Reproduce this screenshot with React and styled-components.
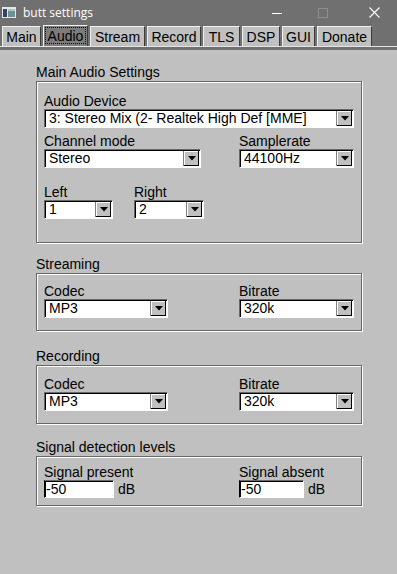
import React from "react";
import styled, { createGlobalStyle } from "styled-components";

const GlobalStyle = createGlobalStyle`
  html, body {
    margin: 0;
    padding: 0;
    background: #c0c0c0;
  }
  body {
    font-family: "Liberation Sans", Arial, sans-serif;
    font-size: 14px;
  }
`;

const Window = styled.div`
  width: 397px;
  height: 574px;
  background: #c0c0c0;
  display: flex;
  flex-direction: column;
  overflow: hidden;
`;

const TitleBar = styled.div`
  height: 25px;
  flex-shrink: 0;
  background: #707070;
  display: flex;
  align-items: center;
  color: #fff;
`;

const AppIcon = styled.svg`
  margin-left: 2px;
  flex-shrink: 0;
`;

const Title = styled.span`
  flex: 1;
  margin-left: 7px;
  font-family: "Segoe UI", "Open Sans", sans-serif;
  font-size: 12px;
  color: #fff;
`;

const WinButton = styled.div`
  width: 46px;
  height: 25px;
  margin-left: ${(p) => p.$gap || 0}px;
  display: flex;
  align-items: center;
  justify-content: center;
`;

const TabStrip = styled.div`
  height: 25px;
  flex-shrink: 0;
  background: #707070;
  display: flex;
  flex-direction: column;
`;

const TabRow = styled.div`
  height: 20px;
  margin-top: 1px;
  padding-left: 2px;
  display: flex;
  align-items: flex-end;
  gap: 2px;
`;

const Tab = styled.div`
  width: ${(p) => p.$w}px;
  height: ${(p) => (p.$active ? 21 : 20)}px;
  box-sizing: border-box;
  border-top: 1px solid #f0f0f0;
  border-left: 1px solid #f0f0f0;
  border-right: 1px solid #3c3c3c;
  background: ${(p) => (p.$active ? "#7c7c7c" : "#c0c0c0")};
  display: flex;
  align-items: center;
  justify-content: center;
  font-size: 14px;
  color: #000;
  outline: ${(p) => (p.$active ? "1px dotted #000" : "none")};
  outline-offset: -3px;
`;

const TabLine = styled.div`
  height: 1px;
  background: #e4e4e4;
`;

const Content = styled.div`
  padding: 14px 35px 0 36px;
`;

const GroupTitle = styled.div`
  height: 16px;
  line-height: 16px;
  margin-top: ${(p) => p.$mt || 0}px;
  color: #000;
`;

const GroupBox = styled.div`
  width: 326px;
  box-sizing: border-box;
  margin-top: 1px;
  padding: ${(p) => p.$pt}px 7px ${(p) => p.$pb}px 7px;
  border: 1px solid #676767;
  box-shadow: 1px 1px 0 #fff, inset 1px 1px 0 #fff;
`;

const Row = styled.div`
  display: flex;
  margin-top: ${(p) => p.$mt || 0}px;
`;

const Field = styled.div`
  width: ${(p) => (p.$w ? `${p.$w}px` : "auto")};
  flex-shrink: 0;
`;

const Label = styled.div`
  height: 16px;
  line-height: 16px;
  color: #000;
  white-space: nowrap;
`;

const SelectBox = styled.div`
  width: ${(p) => p.$w}px;
  height: 19px;
  box-sizing: border-box;
  display: flex;
  background: #fff;
  border-top: 1px solid #696969;
  border-left: 1px solid #696969;
  border-right: 1px solid #fff;
  border-bottom: 1px solid #fff;
  box-shadow: inset 1px 1px 0 #000;
`;

const SelectText = styled.div`
  flex: 1;
  padding-left: 4px;
  line-height: 17px;
  white-space: nowrap;
  overflow: hidden;
  color: #000;
`;

const ArrowButton = styled.div`
  width: 16px;
  margin: 1px 1px 1px 0;
  box-sizing: border-box;
  background: #c0c0c0;
  border-left: 1px solid #808080;
  box-shadow: inset -1px -1px 0 #000, inset 1px 1px 0 #fff;
  display: flex;
  align-items: center;
  justify-content: center;
`;

const InputRow = styled.div`
  display: flex;
  align-items: center;
`;

const InputBox = styled.div`
  width: ${(p) => p.$w}px;
  height: 18px;
  box-sizing: border-box;
  background: #fff;
  border-top: 1px solid #696969;
  border-left: 1px solid #000;
  border-right: 1px solid #fff;
  border-bottom: 1px solid #fff;
  box-shadow: inset 1px 1px 0 #000;
  padding-left: 1px;
  line-height: 16px;
  color: #000;
`;

const Unit = styled.span`
  margin-left: 4px;
  color: #000;
`;

const Select = ({ w, value }) => (
  <SelectBox $w={w}>
    <SelectText>{value}</SelectText>
    <ArrowButton>
      <svg width="8" height="5" viewBox="0 0 8 5">
        <polygon points="0,0 8,0 4,4.5" fill="#000" />
      </svg>
    </ArrowButton>
  </SelectBox>
);

const tabs = [
  { name: "Main", w: 39 },
  { name: "Audio", w: 45, active: true },
  { name: "Stream", w: 55 },
  { name: "Record", w: 54 },
  { name: "TLS", w: 37 },
  { name: "DSP", w: 38 },
  { name: "GUI", w: 33 },
  { name: "Donate", w: 55 },
];

const CodecRow = () => (
  <Row>
    <Field $w={195}>
      <Label>Codec</Label>
      <Select w={124} value="MP3" />
    </Field>
    <Field>
      <Label>Bitrate</Label>
      <Select w={115} value="320k" />
    </Field>
  </Row>
);

export default function App() {
  return (
    <>
      <GlobalStyle />
      <Window>
        <TitleBar>
          <AppIcon width="14" height="11" viewBox="0 0 14 11">
            <rect x="0" y="0" width="14" height="11" fill="#e6e6e6" />
            <rect x="1" y="2" width="4" height="8" fill="#33456b" />
            <rect x="6" y="2" width="7" height="8" fill="#6b9393" />
            <rect x="6" y="2" width="7" height="2" fill="#a9c4c4" />
          </AppIcon>
          <Title>butt settings</Title>
          <WinButton>
            <svg width="10" height="10" viewBox="0 0 10 10">
              <line x1="0" y1="5.5" x2="10" y2="5.5" stroke="#fff" strokeWidth="1" />
            </svg>
          </WinButton>
          <WinButton>
            <svg width="10" height="10" viewBox="0 0 10 10">
              <rect x="0.5" y="0.5" width="9" height="9" fill="none" stroke="#8e8e8e" strokeWidth="1" />
            </svg>
          </WinButton>
          <WinButton $gap={5}>
            <svg width="11" height="11" viewBox="0 0 11 11">
              <path d="M0.5 0.5 L10.5 10.5 M10.5 0.5 L0.5 10.5" stroke="#fff" strokeWidth="1.1" />
            </svg>
          </WinButton>
        </TitleBar>

        <TabStrip>
          <TabRow>
            {tabs.map((t) => (
              <Tab key={t.name} $w={t.w} $active={t.active}>
                {t.name}
              </Tab>
            ))}
          </TabRow>
          <TabLine />
        </TabStrip>

        <Content>
          <GroupTitle>Main Audio Settings</GroupTitle>
          <GroupBox $pt={11} $pb={23}>
            <Field>
              <Label>Audio Device</Label>
              <Select w={310} value="3: Stereo Mix (2- Realtek High Def [MME]" />
            </Field>
            <Row $mt={5}>
              <Field $w={195}>
                <Label>Channel mode</Label>
                <Select w={157} value="Stereo" />
              </Field>
              <Field>
                <Label>Samplerate</Label>
                <Select w={115} value="44100Hz" />
              </Field>
            </Row>
            <Row $mt={16}>
              <Field $w={90}>
                <Label>Left</Label>
                <Select w={69} value="1" />
              </Field>
              <Field>
                <Label>Right</Label>
                <Select w={70} value="2" />
              </Field>
            </Row>
          </GroupBox>

          <GroupTitle $mt={13}>Streaming</GroupTitle>
          <GroupBox $pt={9} $pb={12}>
            <CodecRow />
          </GroupBox>

          <GroupTitle $mt={17}>Recording</GroupTitle>
          <GroupBox $pt={10} $pb={12}>
            <CodecRow />
          </GroupBox>

          <GroupTitle $mt={15}>Signal detection levels</GroupTitle>
          <GroupBox $pt={7} $pb={7}>
            <Row>
              <Field $w={195}>
                <Label>Signal present</Label>
                <InputRow>
                  <InputBox $w={70}>-50</InputBox>
                  <Unit>dB</Unit>
                </InputRow>
              </Field>
              <Field>
                <Label>Signal absent</Label>
                <InputRow>
                  <InputBox $w={65}>-50</InputBox>
                  <Unit>dB</Unit>
                </InputRow>
              </Field>
            </Row>
          </GroupBox>
        </Content>
      </Window>
    </>
  );
}
